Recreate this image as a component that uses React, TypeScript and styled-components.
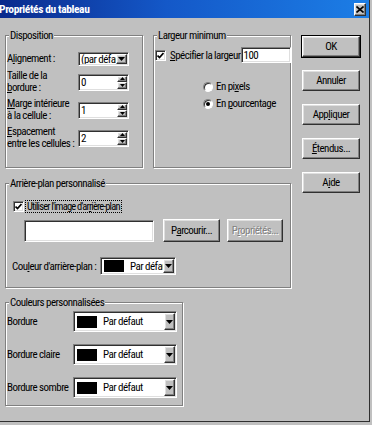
import React from 'react';
import styled, { createGlobalStyle, css } from 'styled-components';

const FONT = `"Roboto Condensed", "Liberation Sans Narrow", "Liberation Sans", sans-serif`;

const GlobalStyle = createGlobalStyle`
  html, body { margin: 0; padding: 0; background: #c0c0c0; }
  body { font-family: ${FONT}; font-size: 11px; letter-spacing: -0.55px; color: #000; overflow: hidden; }
  * { box-sizing: border-box; }
`;

const sunken = css`
  border: 1px solid;
  border-color: #808080 #ffffff #ffffff #808080;
  box-shadow: inset 1px 1px 0 #303030, inset -1px -1px 0 #dfdfdf;
  background: #ffffff;
`;

const raised = css`
  border: 1px solid;
  border-color: #ffffff #303030 #303030 #ffffff;
  box-shadow: inset -1px -1px 0 #808080, inset 1px 1px 0 #dfdfdf;
  background: #c0c0c0;
`;

const Window = styled.div`
  width: 370px;
  height: 422px;
  border-right: 1px solid #303030;
  border-bottom: 1px solid #303030;
  background: #c0c0c0;
  display: flex;
  flex-direction: column;
`;

const TitleBar = styled.div`
  height: 18px;
  flex: none;
  display: flex;
  align-items: center;
  justify-content: space-between;
  padding-right: 3px;
  background: linear-gradient(to right, #0a2a8c 0%, #1458c8 45%, #1c7ee6 100%);
`;

const Title = styled.span`
  color: #ffffff;
  font-weight: bold;
  font-size: 11.5px;
  letter-spacing: -0.4px;
  margin-left: -1px;
  white-space: nowrap;
`;

const CloseBtn = styled.span`
  ${raised};
  width: 12px;
  height: 13px;
  display: flex;
  align-items: center;
  justify-content: center;
`;

const Content = styled.div`
  display: flex;
  align-items: flex-start;
  padding: 17px 0 0 5px;
`;

const MainColumn = styled.div`
  display: flex;
  flex-direction: column;
  width: 286px;
`;

const TopRow = styled.div`
  display: flex;
  gap: 10px;
`;

const GroupBox = styled.div<{ $w: number; $h: number; $mt?: number }>`
  position: relative;
  width: ${(p) => p.$w}px;
  height: ${(p) => p.$h}px;
  margin-top: ${(p) => p.$mt ?? 0}px;
  border: 1px solid #808080;
  box-shadow: inset 1px 1px 0 #ffffff, 1px 1px 0 #ffffff;
`;

const Caption = styled.span`
  position: absolute;
  top: -7px;
  left: 3px;
  padding: 0 1px;
  background: #c0c0c0;
  line-height: 13px;
  white-space: nowrap;
`;

const FormGrid = styled.div<{ $cols: string; $rows: string; $gap: number; $pad: string }>`
  display: grid;
  grid-template-columns: ${(p) => p.$cols};
  grid-template-rows: ${(p) => p.$rows};
  row-gap: ${(p) => p.$gap}px;
  align-items: center;
  padding: ${(p) => p.$pad};
`;

const Label = styled.span`
  line-height: 12px;
  white-space: nowrap;
`;

const Field = styled.div<{ $w?: number; $h: number; $ml?: number }>`
  ${sunken};
  width: ${(p) => (p.$w ? `${p.$w}px` : 'auto')};
  height: ${(p) => p.$h}px;
  margin-left: ${(p) => p.$ml ?? 0}px;
  flex: none;
  display: flex;
  align-items: stretch;
  padding: 1px;
  overflow: hidden;
`;

const FieldText = styled.span`
  flex: 1;
  min-width: 0;
  display: flex;
  align-items: center;
  padding-left: 1px;
  white-space: nowrap;
  overflow: hidden;
`;

const Swatch = styled.span`
  flex: none;
  align-self: center;
  width: 20px;
  height: 12px;
  margin: 0 5px 0 2px;
  background: #000000;
`;

const ArrowBtn = styled.span`
  ${raised};
  flex: none;
  width: 11px;
  display: flex;
  align-items: center;
  justify-content: center;
`;

const SpinCol = styled.span`
  flex: none;
  width: 10px;
  display: flex;
  flex-direction: column;
`;

const SpinBtn = styled.span`
  ${raised};
  flex: 1;
  display: flex;
  align-items: center;
  justify-content: center;
`;

const InnerPad = styled.div<{ $pad: string }>`
  display: flex;
  flex-direction: column;
  padding: ${(p) => p.$pad};
`;

const Row = styled.div<{ $mt?: number; $h?: number }>`
  display: flex;
  align-items: center;
  margin-top: ${(p) => p.$mt ?? 0}px;
  height: ${(p) => (p.$h ? `${p.$h}px` : 'auto')};
`;

const CheckBox = styled.span`
  ${sunken};
  flex: none;
  width: 11px;
  height: 11px;
  display: inline-flex;
  align-items: center;
  justify-content: center;
`;

const CheckText = styled.span<{ $ml: number }>`
  margin-left: ${(p) => p.$ml}px;
  line-height: 11px;
  white-space: nowrap;
`;

const FocusText = styled.span`
  margin-left: 1px;
  border: 1px dotted #000;
  padding: 0 1px;
  line-height: 11px;
  font-size: 10.5px;
  letter-spacing: -0.8px;
  white-space: nowrap;
`;

const RadioList = styled.div`
  display: flex;
  flex-direction: column;
  gap: 4px;
  margin: 17px 0 0 48px;
`;

const RadioRow = styled.label`
  display: flex;
  align-items: center;
  height: 13px;
  gap: 3px;
  white-space: nowrap;
`;

const Radio = styled.span`
  flex: none;
  width: 10px;
  height: 10px;
  border-radius: 50%;
  background: #ffffff;
  border: 1px solid;
  border-color: #808080 #ffffff #ffffff #808080;
  box-shadow: inset 1px 1px 0 #303030;
  display: flex;
  align-items: center;
  justify-content: center;
`;

const Dot = styled.span`
  width: 4px;
  height: 4px;
  border-radius: 50%;
  background: #000;
`;

const ButtonCol = styled.div`
  display: flex;
  flex-direction: column;
  gap: 13px;
  width: 58px;
  margin-left: 11px;
  padding-top: 1px;
`;

const Button = styled.button<{ $w?: number; $h?: number; $ml?: number; $default?: boolean }>`
  ${raised};
  font: inherit;
  letter-spacing: inherit;
  color: #000;
  padding: 0;
  width: ${(p) => (p.$w ? `${p.$w}px` : '100%')};
  height: ${(p) => p.$h ?? 21}px;
  margin-left: ${(p) => p.$ml ?? 0}px;
  flex: none;
  white-space: nowrap;
  overflow: hidden;
  ${(p) =>
    p.$default &&
    css`
      outline: 1px solid #000;
    `}
`;

const Disabled = styled.span`
  color: #808080;
  text-shadow: 1px 1px 0 #ffffff;
`;

const FixedLabel = styled.span<{ $w: number; $ml?: number }>`
  width: ${(p) => p.$w}px;
  margin-left: ${(p) => p.$ml ?? 0}px;
  flex: none;
  white-space: nowrap;
`;

const Spacer = styled.span`
  flex: 1;
`;

const DownArrow = () => (
  <svg width="7" height="4" viewBox="0 0 7 4">
    <polygon points="0,0 7,0 3.5,4" fill="#000" />
  </svg>
);

const TinyArrow = ({ up }: { up?: boolean }) => (
  <svg width="5" height="3" viewBox="0 0 5 3">
    <polygon points={up ? '0,3 5,3 2.5,0' : '0,0 5,0 2.5,3'} fill="#000" />
  </svg>
);

const Check = () => (
  <svg width="7" height="7" viewBox="0 0 7 7">
    <polyline points="0.5,3.5 2.5,5.5 6.5,1" fill="none" stroke="#000" strokeWidth="1.7" />
  </svg>
);

const SpinBox = ({ value, h }: { value: string; h: number }) => (
  <Field $h={h}>
    <FieldText>{value}</FieldText>
    <SpinCol>
      <SpinBtn>
        <TinyArrow up />
      </SpinBtn>
      <SpinBtn>
        <TinyArrow />
      </SpinBtn>
    </SpinCol>
  </Field>
);

const ColorCombo = ({ w, h, text, ml }: { w: number; h: number; text: string; ml?: number }) => (
  <Field $w={w} $h={h} $ml={ml}>
    <Swatch />
    <FieldText>{text}</FieldText>
    <ArrowBtn>
      <DownArrow />
    </ArrowBtn>
  </Field>
);

export default function App() {
  return (
    <>
      <GlobalStyle />
      <Window>
        <TitleBar>
          <Title>Propriétés du tableau</Title>
          <CloseBtn>
            <svg width="8" height="7" viewBox="0 0 8 7">
              <path d="M0.5 0.5 L7.5 6.5 M7.5 0.5 L0.5 6.5" stroke="#000" strokeWidth="1.6" />
            </svg>
          </CloseBtn>
        </TitleBar>
        <Content>
          <MainColumn>
            <TopRow>
              <GroupBox $w={138} $h={133}>
                <Caption>Disposition</Caption>
                <FormGrid $cols="71px 51px" $rows="14px 24px 24px 24px" $gap={4} $pad="16px 0 0 1px">
                  <Label>
                    A<u>l</u>ignement :
                  </Label>
                  <Field $h={14}>
                    <FieldText>(par défaut)</FieldText>
                    <ArrowBtn>
                      <DownArrow />
                    </ArrowBtn>
                  </Field>
                  <Label>
                    Taille de la
                    <br />
                    <u>b</u>ordure :
                  </Label>
                  <SpinBox value="0" h={17} />
                  <Label>
                    <u>M</u>arge intérieure
                    <br />à la cellule :
                  </Label>
                  <SpinBox value="1" h={17} />
                  <Label>
                    <u>E</u>spacement
                    <br />
                    entre les cellules :
                  </Label>
                  <SpinBox value="2" h={17} />
                </FormGrid>
              </GroupBox>
              <GroupBox $w={138} $h={133}>
                <Caption>Largeur minimum</Caption>
                <InnerPad $pad="11px 4px 0 1px">
                  <Row $h={16}>
                    <CheckBox>
                      <Check />
                    </CheckBox>
                    <CheckText $ml={4}>
                      <u>S</u>pécifier la largeur
                    </CheckText>
                    <Spacer />
                    <Field $w={50} $h={16}>
                      <FieldText>100</FieldText>
                    </Field>
                  </Row>
                  <RadioList>
                    <RadioRow>
                      <Radio />
                      <span>
                        En pi<u>x</u>els
                      </span>
                    </RadioRow>
                    <RadioRow>
                      <Radio>
                        <Dot />
                      </Radio>
                      <span>
                        En <u>p</u>ourcentage
                      </span>
                    </RadioRow>
                  </RadioList>
                </InnerPad>
              </GroupBox>
            </TopRow>

            <GroupBox $w={286} $h={105} $mt={15}>
              <Caption>Arrière-plan personnalisé</Caption>
              <InnerPad $pad="16px 0 0 7px">
                <Row $h={13}>
                  <CheckBox>
                    <Check />
                  </CheckBox>
                  <FocusText>
                    Utiliser l'image d'ar<u>r</u>ière-plan
                  </FocusText>
                </Row>
                <Row $mt={6} $h={23}>
                  <Field $w={130} $h={22} $ml={11} />
                  <Button $w={57} $h={23} $ml={9}>
                    P<u>a</u>rcourir...
                  </Button>
                  <Button $w={56} $h={23} $ml={7}>
                    <Disabled>
                      P<u>r</u>opriétés...
                    </Disabled>
                  </Button>
                </Row>
                <Row $mt={15} $h={18}>
                  <FixedLabel $w={88} $ml={-1}>
                    Cou<u>l</u>eur d'arrière-plan :
                  </FixedLabel>
                  <ColorCombo w={76} h={18} text="Par défaut" />
                </Row>
              </InnerPad>
            </GroupBox>

            <GroupBox $w={178} $h={104} $mt={14}>
              <Caption>Couleurs personnalisées</Caption>
              <FormGrid $cols="66px 104px" $rows="21px 21px 21px" $gap={12} $pad="8px 0 0 1px">
                <Label>Bordure</Label>
                <ColorCombo w={104} h={21} text="Par défaut" />
                <Label>Bordure claire</Label>
                <ColorCombo w={104} h={21} text="Par défaut" />
                <Label>Bordure sombre</Label>
                <ColorCombo w={104} h={21} text="Par défaut" />
              </FormGrid>
            </GroupBox>
          </MainColumn>

          <ButtonCol>
            <Button $default>OK</Button>
            <Button>Annuler</Button>
            <Button>
              App<u>l</u>iquer
            </Button>
            <Button>
              <u>É</u>tendus...
            </Button>
            <Button>
              A<u>i</u>de
            </Button>
          </ButtonCol>
        </Content>
      </Window>
    </>
  );
}
